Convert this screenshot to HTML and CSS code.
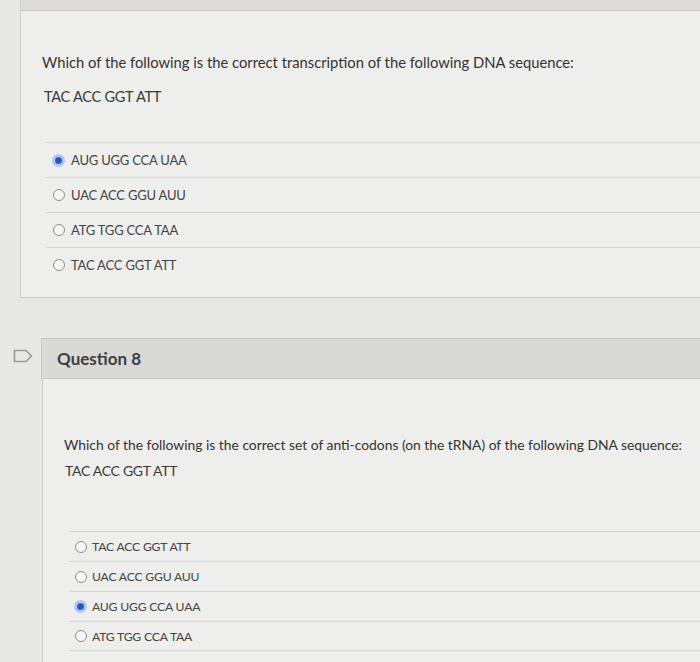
FILE: index.html
```html
<!DOCTYPE html>
<html lang="en">
<head>
<meta charset="utf-8">
<title>Quiz</title>
<link rel="stylesheet" href="styles.css">
</head>
<body>
<div class="topbar"></div>
<section class="card card-one">
  <p class="q-text">Which of the following is the correct transcription of the following DNA sequence:</p>
  <p class="q-seq">TAC ACC GGT ATT</p>
  <ul class="answers">
    <li class="answer"><span class="radio checked"></span><span>AUG UGG CCA UAA</span></li>
    <li class="answer"><span class="radio"></span><span>UAC ACC GGU AUU</span></li>
    <li class="answer"><span class="radio"></span><span>ATG TGG CCA TAA</span></li>
    <li class="answer"><span class="radio"></span><span>TAC ACC GGT ATT</span></li>
  </ul>
</section>
<div class="q-head-row">
  <svg class="flag" width="20" height="14" viewBox="0 0 20 14"><path d="M1.5 1.5 H13 L18.5 7 L13 12.5 H1.5 Z" fill="none" stroke="#9a9a98" stroke-width="1.6" stroke-linejoin="round"/></svg>
  <div class="q-head"><h2>Question 8</h2></div>
</div>
<section class="card card-two">
  <p class="q-text">Which of the following is the correct set of anti-codons (on the tRNA) of the following DNA sequence:</p>
  <p class="q-seq">TAC ACC GGT ATT</p>
  <ul class="answers">
    <li class="answer"><span class="radio"></span><span>TAC ACC GGT ATT</span></li>
    <li class="answer"><span class="radio"></span><span>UAC ACC GGU AUU</span></li>
    <li class="answer"><span class="radio checked"></span><span>AUG UGG CCA UAA</span></li>
    <li class="answer"><span class="radio"></span><span>ATG TGG CCA TAA</span></li>
  </ul>
</section>
</body>
</html>
```
FILE: styles.css
```css
* { box-sizing: border-box; }
html, body { margin: 0; padding: 0; }
body {
  width: 700px;
  height: 662px;
  overflow: hidden;
  background: #e7e7e4;
  font-family: Lato, "Liberation Sans", sans-serif;
  color: #3c3c3c;
}
.topbar {
  margin-left: 20px;
  height: 11px;
  background: #dcdbd8;
  border-bottom: 1px solid #c8c8c5;
  border-left: 1px solid #cfcfcc;
}
.card {
  background: #eeeeec;
  border-left: 1px solid #cdcdca;
}
.card-one {
  margin-left: 20px;
  padding: 41px 0 14px 21px;
  border-bottom: 1px solid #c9c9c6;
  height: 287px;
}
.q-text {
  margin: 0;
  font-size: 14.75px;
  line-height: 20px;
  color: #333;
  white-space: nowrap;
}
.q-seq {
  margin: 15px 0 0 2px;
  font-size: 14.6px;
  line-height: 20px;
  color: #3a3a3a;
  letter-spacing: -0.3px;
}
.answers {
  list-style: none;
  margin: 35px 0 0 4px;
  padding: 0;
}
.answer {
  display: flex;
  align-items: center;
  gap: 6px;
  height: 35px;
  padding-left: 7px;
  border-top: 1px solid #d3d3d0;
  font-size: 13px;
  color: #444;
  letter-spacing: -0.2px;
}
.radio {
  width: 12px;
  height: 12px;
  border-radius: 50%;
  border: 1.5px solid #8c8c8a;
  background: #f6f6f4;
  flex: none;
}
.radio.checked {
  width: 13px;
  height: 13px;
  margin-left: -1px;
  border: 2px solid #b3c5f2;
  background: #2c54c6;
  box-shadow: inset 0 0 0 1px #dfe6fa;
}
.q-head-row {
  display: flex;
  align-items: center;
  margin-top: 40px;
  height: 41px;
}
.flag {
  margin: -6px 8px 0 13px;
  flex: none;
}
.q-head {
  flex: 1;
  height: 41px;
  background: #d9d9d6;
  border-top: 1px solid #c6c6c3;
  border-bottom: 1px solid #c6c6c3;
  border-left: 1px solid #c9c9c6;
  display: flex;
  align-items: center;
  padding-left: 15px;
}
.q-head h2 {
  margin: 0;
  font-size: 17px;
  font-weight: 700;
  color: #404040;
}
.card-two {
  margin-left: 42px;
  padding: 56px 0 0 21px;
  height: 300px;
}
.card-two .q-text {
  font-size: 13.85px;
}
.card-two .q-seq {
  margin-top: 6px;
  margin-left: 1px;
  font-size: 14px;
}
.card-two .answers {
  margin: 50px 0 0 5px;
}
.card-two .answer {
  height: 30px;
  padding-left: 6px;
  font-size: 12.2px;
  gap: 5px;
}
.card-two .answer:last-child {
  border-bottom: 1px solid #d3d3d0;
}
```
